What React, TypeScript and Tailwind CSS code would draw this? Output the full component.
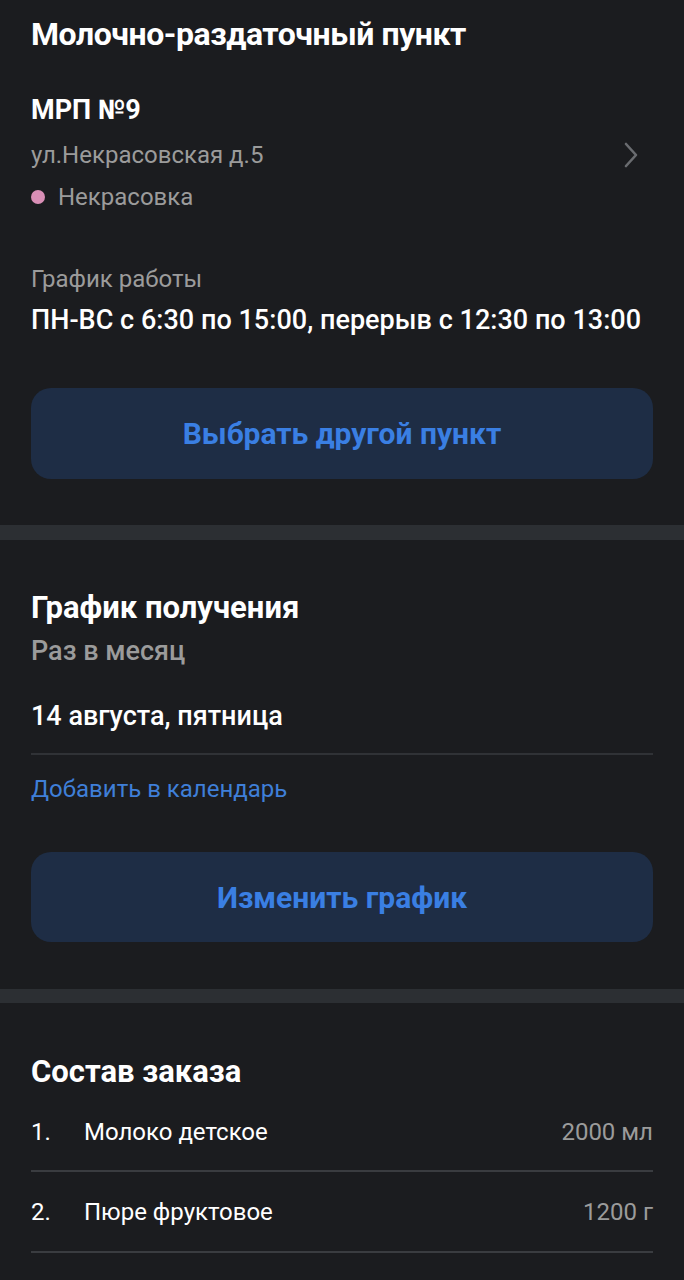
import React from "react";

function Chevron() {
  return (
    <svg width="16" height="26" viewBox="0 0 16 26" fill="none">
      <path d="M3 2 L13 13 L3 24" stroke="#6a6c70" strokeWidth="2.6" strokeLinecap="round" strokeLinejoin="round" />
    </svg>
  );
}

export default function App() {
  return (
    <div className="w-[684px] h-[1280px] overflow-hidden bg-[#1b1c1f] text-white" style={{ fontFamily: "Roboto, 'Noto Sans', sans-serif" }}>
      <section className="px-[31px] pt-[15px] pb-[46px]">
        <h1 className="text-[32px] font-bold leading-[38px] tracking-[-0.45px] whitespace-nowrap">Молочно-раздаточный пункт</h1>
        <div className="mt-[41px] flex items-center">
          <div className="flex-1">
            <div className="text-[27px] font-bold leading-[32px]">МРП №9</div>
            <div className="mt-[14px] text-[24px] leading-[30px] text-[#9b9b9b]">ул.Некрасовская д.5</div>
            <div className="mt-[12px] flex items-center gap-[13px] text-[24px] leading-[30px] text-[#9b9b9b]">
              <span className="inline-block w-[14px] h-[14px] rounded-full bg-[#d98fb6]" />
              <span>Некрасовка</span>
            </div>
          </div>
          <div className="mr-[14px] mt-[4px]">
            <Chevron />
          </div>
        </div>
        <div className="mt-[52px] text-[24px] leading-[30px] text-[#9b9b9b]">График работы</div>
        <div className="mt-[9px] text-[27px] font-medium leading-[34px] tracking-[0.03px] whitespace-nowrap">ПН-ВС с 6:30 по 15:00, перерыв с 12:30 по 13:00</div>
        <button className="mt-[51px] w-full h-[91px] rounded-[20px] bg-[#1e2d45] text-[#3a7fe3] text-[30px] font-bold flex items-center justify-center">
          Выбрать другой пункт
        </button>
      </section>
      <div className="h-[15px] bg-[#2c2f33]" />
      <section className="px-[31px] pt-[49px] pb-[47px]">
        <h2 className="text-[31px] font-bold leading-[38px]">График получения</h2>
        <div className="mt-[8px] text-[27px] font-medium leading-[32px] text-[#9b9b9b]">Раз в месяц</div>
        <div className="mt-[33px] text-[27px] font-medium leading-[32px]">14 августа, пятница</div>
        <div className="mt-[21px] h-[2px] bg-[#303236]" />
        <div className="mt-[19px] text-[24px] leading-[30px] text-[#3f7fd8]">Добавить в календарь</div>
        <button className="mt-[48px] w-full h-[90px] rounded-[20px] bg-[#1e2d45] text-[#3a7fe3] text-[30px] font-bold flex items-center justify-center">
          Изменить график
        </button>
      </section>
      <div className="h-[14px] bg-[#2c2f33]" />
      <section className="px-[31px] pt-[50px]">
        <h2 className="text-[31px] font-bold leading-[38px]">Состав заказа</h2>
        <div className="mt-[26px] flex items-center text-[24px] leading-[30px]">
          <span className="w-[53px]">1.</span>
          <span className="flex-1">Молоко детское</span>
          <span className="text-[#9b9b9b]">2000 мл</span>
        </div>
        <div className="mt-[23px] h-[2px] bg-[#3a3c40]" />
        <div className="mt-[25px] flex items-center text-[24px] leading-[30px]">
          <span className="w-[53px]">2.</span>
          <span className="flex-1">Пюре фруктовое</span>
          <span className="text-[#9b9b9b]">1200 г</span>
        </div>
        <div className="mt-[24px] h-[2px] bg-[#3a3c40]" />
      </section>
    </div>
  );
}
